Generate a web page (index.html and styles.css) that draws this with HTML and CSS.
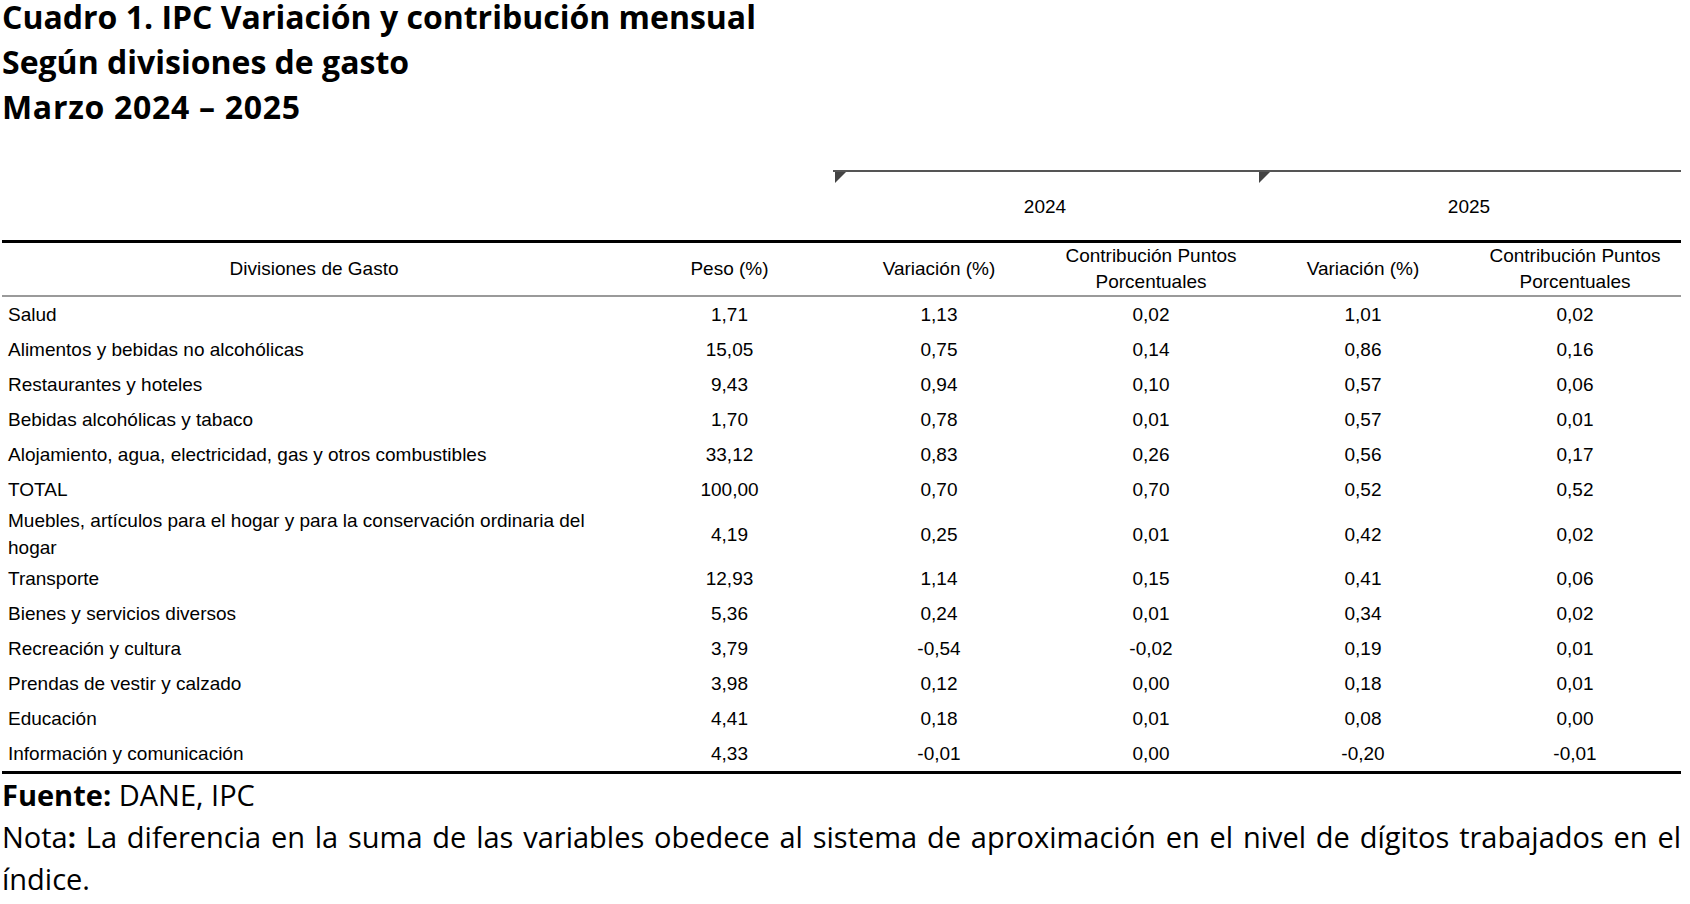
FILE: index.html
```html
<!DOCTYPE html>
<html lang="es">
<head>
<meta charset="utf-8">
<title>Cuadro 1. IPC</title>
<link rel="stylesheet" href="styles.css">
</head>
<body>
<div class="page">
  <h1 class="title">Cuadro 1. IPC Variación y contribución mensual<br>Según divisiones de gasto<br><span class="period">Marzo 2024 – 2025</span></h1>
  <table class="ipc">
    <colgroup>
      <col class="c-div"><col class="c-peso"><col class="c-num"><col class="c-num"><col class="c-num"><col class="c-num">
    </colgroup>
    <thead>
      <tr class="years">
        <th class="blank" colspan="2"></th>
        <th class="year" colspan="2"><span class="mark"></span>2024</th>
        <th class="year" colspan="2"><span class="mark"></span>2025</th>
      </tr>
      <tr class="heads">
        <th>Divisiones de Gasto</th>
        <th>Peso (%)</th>
        <th>Variación (%)</th>
        <th>Contribución Puntos<br>Porcentuales</th>
        <th>Variación (%)</th>
        <th>Contribución Puntos<br>Porcentuales</th>
      </tr>
    </thead>
    <tbody>
      <tr><td>Salud</td><td>1,71</td><td>1,13</td><td>0,02</td><td>1,01</td><td>0,02</td></tr>
      <tr><td>Alimentos y bebidas no alcohólicas</td><td>15,05</td><td>0,75</td><td>0,14</td><td>0,86</td><td>0,16</td></tr>
      <tr><td>Restaurantes y hoteles</td><td>9,43</td><td>0,94</td><td>0,10</td><td>0,57</td><td>0,06</td></tr>
      <tr><td>Bebidas alcohólicas y tabaco</td><td>1,70</td><td>0,78</td><td>0,01</td><td>0,57</td><td>0,01</td></tr>
      <tr><td>Alojamiento, agua, electricidad, gas y otros combustibles</td><td>33,12</td><td>0,83</td><td>0,26</td><td>0,56</td><td>0,17</td></tr>
      <tr><td>TOTAL</td><td>100,00</td><td>0,70</td><td>0,70</td><td>0,52</td><td>0,52</td></tr>
      <tr class="tall"><td>Muebles, artículos para el hogar y para la conservación ordinaria del hogar</td><td>4,19</td><td>0,25</td><td>0,01</td><td>0,42</td><td>0,02</td></tr>
      <tr><td>Transporte</td><td>12,93</td><td>1,14</td><td>0,15</td><td>0,41</td><td>0,06</td></tr>
      <tr><td>Bienes y servicios diversos</td><td>5,36</td><td>0,24</td><td>0,01</td><td>0,34</td><td>0,02</td></tr>
      <tr><td>Recreación y cultura</td><td>3,79</td><td>-0,54</td><td>-0,02</td><td>0,19</td><td>0,01</td></tr>
      <tr><td>Prendas de vestir y calzado</td><td>3,98</td><td>0,12</td><td>0,00</td><td>0,18</td><td>0,01</td></tr>
      <tr><td>Educación</td><td>4,41</td><td>0,18</td><td>0,01</td><td>0,08</td><td>0,00</td></tr>
      <tr class="last"><td>Información y comunicación</td><td>4,33</td><td>-0,01</td><td>0,00</td><td>-0,20</td><td>-0,01</td></tr>
    </tbody>
  </table>
  <p class="fuente"><b>Fuente:</b> DANE, IPC</p>
  <p class="nota"><span class="nota-label">Nota<b>:</b></span> La diferencia en la suma de las variables obedece al sistema de aproximación en el nivel de dígitos trabajados en el índice.</p>
</div>
</body>
</html>
```
FILE: styles.css
```css
html, body {
  margin: 0;
  padding: 0;
  background: #fff;
  color: #000;
}

.page {
  width: 1679px;
  margin-left: 2px;
}

.title {
  margin: 0;
  font-family: "Open Sans", "Noto Sans", sans-serif;
  font-weight: 700;
  font-size: 32px;
  line-height: 45px;
  margin-top: -6px;
  letter-spacing: 0;
}

.title .period {
  letter-spacing: 0.7px;
}

.ipc {
  margin-top: 41px;
  width: 1679px;
  border-collapse: collapse;
  table-layout: fixed;
  font-family: "Liberation Sans", Arial, sans-serif;
  font-size: 19px;
}

.c-div { width: 624px; }
.c-peso { width: 207px; }
.c-num { width: 212px; }

.ipc th {
  font-weight: 400;
  padding: 0 6px;
}

.years th {
  height: 66px;
  border-bottom: 3px solid #000;
  vertical-align: middle;
  padding-top: 2px;
}

.years .year {
  position: relative;
  border-top: 2px solid #555;
}

.mark {
  position: absolute;
  left: 2px;
  top: 0;
  width: 0;
  height: 0;
  border-top: 11px solid #444;
  border-right: 11px solid transparent;
}

.heads th {
  height: 52px;
  line-height: 26px;
  border-bottom: 2px solid #9a9a9a;
  vertical-align: middle;
}

.ipc td {
  height: 35px;
  line-height: 27px;
  padding: 0 6px;
  text-align: center;
  vertical-align: middle;
}

.ipc td:first-child {
  text-align: left;
}

.ipc tr.tall td {
  height: 54px;
}

.ipc tr.last td {
  border-bottom: 3px solid #000;
}

.fuente, .nota {
  margin: 0;
  font-family: "Open Sans", "Noto Sans", sans-serif;
  font-size: 29px;
  line-height: 42px;
}

.fuente b {
  font-weight: 700;
}

.nota {
  text-align: justify;
}

.nota-label b {
  font-weight: 700;
}
```
